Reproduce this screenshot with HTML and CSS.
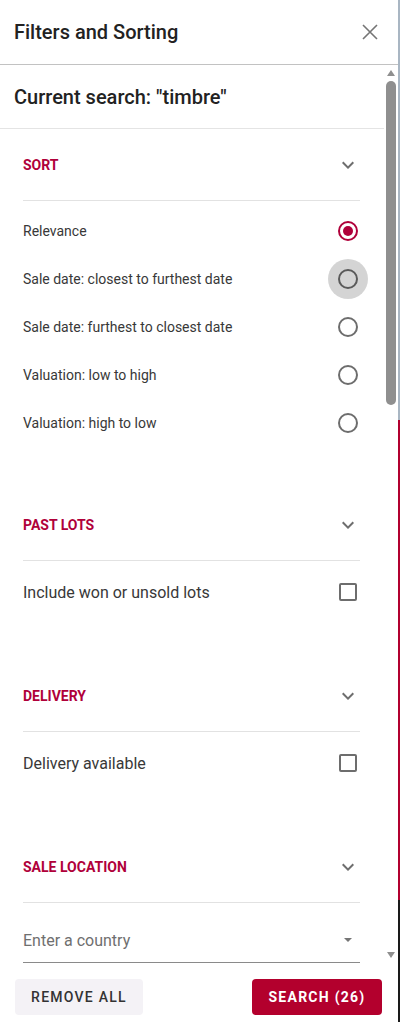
FILE: index.html
```html
<!DOCTYPE html>
<html lang="en">
  <head>
    <meta charset="UTF-8" />
    <meta name="viewport" content="width=device-width, initial-scale=1.0" />
    <link rel="stylesheet" href="styles.css">
    <title>Filters and Sorting</title>
  </head>
  <body>
    <div class="panel">
      <header class="panel-header">
        <h1>Filters and Sorting</h1>
        <button class="close-btn" aria-label="Close">
          <svg width="16" height="16" viewBox="0 0 16 16">
            <path d="M1 1 L15 15 M15 1 L1 15" stroke="#757575" stroke-width="1.6" fill="none" />
          </svg>
        </button>
      </header>

      <div class="panel-body">
        <div class="panel-scroll">
          <div class="current-search">Current search: "timbre"</div>

          <section class="filter filter-sort">
            <div class="filter-head">
              <h2>Sort</h2>
              <svg class="chevron" width="24" height="24" viewBox="0 0 24 24"><path d="M16.59 8.59 12 13.17 7.41 8.59 6 10l6 6 6-6z" /></svg>
            </div>
            <div class="filter-content">
              <label class="option"><span>Relevance</span><span class="radio checked"></span></label>
              <label class="option"><span>Sale date: closest to furthest date</span><span class="radio hover"></span></label>
              <label class="option"><span>Sale date: furthest to closest date</span><span class="radio"></span></label>
              <label class="option"><span>Valuation: low to high</span><span class="radio"></span></label>
              <label class="option"><span>Valuation: high to low</span><span class="radio"></span></label>
            </div>
          </section>

          <section class="filter filter-past">
            <div class="filter-head">
              <h2>Past lots</h2>
              <svg class="chevron" width="24" height="24" viewBox="0 0 24 24"><path d="M16.59 8.59 12 13.17 7.41 8.59 6 10l6 6 6-6z" /></svg>
            </div>
            <div class="filter-content filter-content-lg">
              <label class="option option-lg"><span>Include won or unsold lots</span><span class="checkbox"></span></label>
            </div>
          </section>

          <section class="filter filter-delivery">
            <div class="filter-head">
              <h2>Delivery</h2>
              <svg class="chevron" width="24" height="24" viewBox="0 0 24 24"><path d="M16.59 8.59 12 13.17 7.41 8.59 6 10l6 6 6-6z" /></svg>
            </div>
            <div class="filter-content filter-content-lg">
              <label class="option option-lg"><span>Delivery available</span><span class="checkbox"></span></label>
            </div>
          </section>

          <section class="filter">
            <div class="filter-head">
              <h2>Sale location</h2>
              <svg class="chevron" width="24" height="24" viewBox="0 0 24 24"><path d="M16.59 8.59 12 13.17 7.41 8.59 6 10l6 6 6-6z" /></svg>
            </div>
            <div class="field">
              <span>Enter a country</span>
              <svg width="24" height="24" viewBox="0 0 24 24"><path d="M8 10l4 4 4-4z" fill="#757575" /></svg>
            </div>
          </section>
        </div>

        <div class="scrollbar">
          <svg class="scroll-arrow" width="8" height="6" viewBox="0 0 8 6"><path d="M0 6 4 0 8 6z" /></svg>
          <div class="scroll-thumb"></div>
          <svg class="scroll-arrow scroll-arrow-down" width="8" height="6" viewBox="0 0 8 6"><path d="M0 0 4 6 8 0z" /></svg>
        </div>
      </div>

      <footer class="panel-footer">
        <button class="btn btn-secondary">Remove all</button>
        <button class="btn btn-primary">Search (26)</button>
      </footer>
    </div>
  </body>
</html>
```

FILE: styles.css
```css
body {
  font-family: Roboto, "Liberation Sans", sans-serif;
  margin: 0;
  height: 1022px;
  overflow: hidden;
  background: linear-gradient(#a9b6c3 0 420px, #b1002f 420px 900px, #1a1a1a 900px);
  color: #222;
}

.panel {
  width: 398px;
  height: 1022px;
  background-color: #fff;
  display: flex;
  flex-direction: column;
}

.panel-header {
  flex-shrink: 0;
  height: 64px;
  display: flex;
  align-items: center;
  justify-content: space-between;
  padding: 0 16px 0 14px;
  border-bottom: 1px solid #c2c2c2;
}

.panel-header h1 {
  margin: 0;
  font-size: 20px;
  font-weight: 500;
  color: #222;
}

.close-btn {
  width: 24px;
  height: 24px;
  padding: 0;
  border: none;
  background: none;
  display: flex;
  align-items: center;
  justify-content: center;
  cursor: pointer;
}

.panel-body {
  flex: 1;
  min-height: 0;
  display: flex;
}

.panel-scroll {
  flex: 1;
  overflow: hidden;
}

/* drawn scrollbar, the list is scrolled to the top */
.scrollbar {
  width: 14px;
  display: flex;
  flex-direction: column;
  align-items: center;
}

.scroll-arrow {
  fill: #8f8f8f;
  margin-top: 5px;
}

.scroll-arrow-down {
  margin-top: auto;
  margin-bottom: 8px;
}

.scroll-thumb {
  width: 10px;
  height: 324px;
  margin-top: 5px;
  border-radius: 5px;
  background-color: #8f8f8f;
}

.current-search {
  height: 63px;
  display: flex;
  align-items: center;
  padding: 0 14px;
  font-size: 20px;
  font-weight: 500;
  border-bottom: 1px solid #e4e4e4;
}

.filter {
  padding: 0 24px 0 23px;
  margin-bottom: 34px;
}

.filter-past,
.filter-delivery {
  margin-bottom: 36px;
}

.filter-head {
  height: 71px;
  display: flex;
  align-items: center;
  justify-content: space-between;
  border-bottom: 1px solid #e2e2e2;
}

.filter-head h2 {
  margin: 0;
  font-size: 14px;
  font-weight: 700;
  color: #b0003a;
  text-transform: uppercase;
}

.chevron {
  fill: #6e6e6e;
}

.filter-content {
  padding: 6px 0 8px;
}

.filter-content-lg {
  padding-top: 7px;
}

.option {
  height: 48px;
  display: flex;
  align-items: center;
  justify-content: space-between;
  font-size: 14px;
  color: #383838;
  cursor: pointer;
}

.option-lg {
  font-size: 16px;
}

.radio {
  position: relative;
  width: 20px;
  height: 20px;
  margin-right: 2px;
  box-sizing: border-box;
  border: 2px solid #6d6d6d;
  border-radius: 50%;
}

.radio.checked {
  border-color: #b0003a;
}

.radio.checked::after {
  content: "";
  position: absolute;
  top: 3px;
  left: 3px;
  width: 10px;
  height: 10px;
  border-radius: 50%;
  background-color: #b0003a;
}

.radio.hover::before {
  content: "";
  position: absolute;
  top: -12px;
  left: -12px;
  width: 40px;
  height: 40px;
  border-radius: 50%;
  background-color: rgba(0, 0, 0, 0.17);
}

.checkbox {
  width: 18px;
  height: 18px;
  margin-right: 3px;
  box-sizing: border-box;
  border: 2px solid #6d6d6d;
  border-radius: 2px;
}

.field {
  height: 44px;
  margin-top: 15px;
  display: flex;
  align-items: center;
  justify-content: space-between;
  border-bottom: 1px solid #8a8a8a;
  font-size: 16px;
  color: #6f6f6f;
}

.panel-footer {
  flex-shrink: 0;
  height: 56px;
  box-sizing: border-box;
  padding: 13px 16px 0 15px;
  display: flex;
  align-items: flex-start;
  justify-content: space-between;
}

.btn {
  height: 36px;
  border: none;
  border-radius: 4px;
  font-family: inherit;
  font-size: 14px;
  letter-spacing: 1.25px;
  text-transform: uppercase;
  cursor: pointer;
}

.btn-secondary {
  width: 128px;
  background-color: #f4f2f6;
  color: #333;
  font-weight: 500;
}

.btn-primary {
  width: 130px;
  background-color: #b3002d;
  color: #fff;
  font-weight: 700;
}
```
